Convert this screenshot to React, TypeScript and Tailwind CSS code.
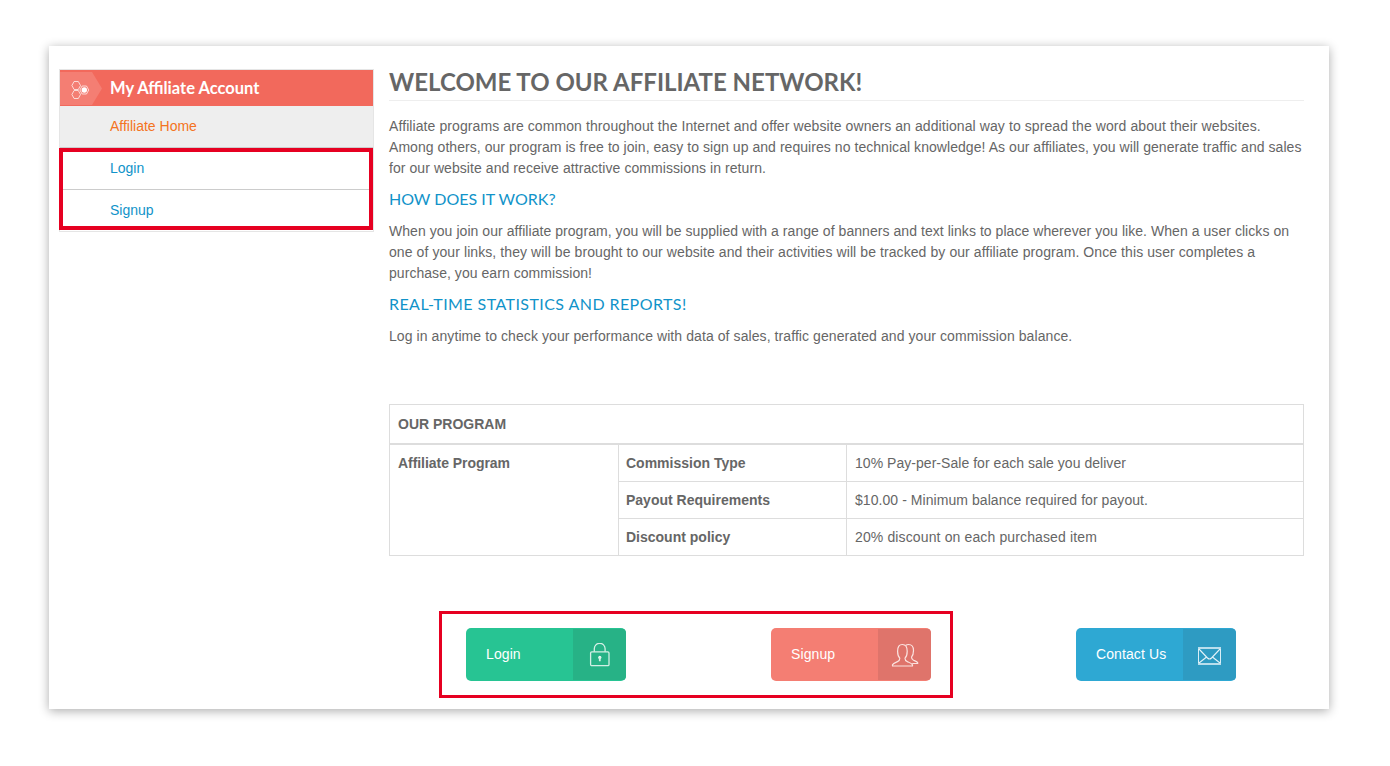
import type { ReactNode } from "react";

const HEADING = "font-['Lato',sans-serif]";

function HexIcon() {
  return (
    <svg className="block" width="20" height="20" viewBox="0 0 20 20" fill="none" stroke="#fff" strokeOpacity="0.7" strokeWidth="1">
      <path d="M4.1 1.5h4.2l2.2 4-2.2 4H4.1l-2.2-4z" />
      <path d="M4.1 10.5h4.2l2.2 4-2.2 4H4.1l-2.2-4z" />
      <path d="M12.1 6h4.4l2.2 4-2.2 4h-4.4L9.9 10z" />
      <circle cx="14.3" cy="10" r="2.7" fill="#fff" stroke="none" />
    </svg>
  );
}

function LockIcon() {
  return (
    <svg className="block" width="21" height="25" viewBox="0 0 21 25" fill="none" stroke="#d3efe5" strokeWidth="1.3">
      <rect x="1.6" y="8.8" width="18.4" height="13.8" rx="1.2" />
      <path d="M5.3 8.7V5.7a5.4 5.4 0 0 1 10.8 0v3" />
      <circle cx="10.8" cy="14.4" r="1.6" fill="#e8f7f1" stroke="none" />
      <path d="M10.8 14.2v4" strokeWidth="1.8" />
    </svg>
  );
}

function UsersIcon() {
  return (
    <svg className="block" width="29" height="25" viewBox="0 0 29 25" fill="none" stroke="#fbe3e0" strokeWidth="1.2" strokeLinejoin="round">
      <path d="M1.5 23h20v-1.2c-.5-1.5-3-2.3-5.2-3.2-1.7-.6-2.3-1.4-2.3-3.4 1.4-1.4 2.2-3.7 2.2-7 0-4.5-1.6-6.7-4.8-6.7S6.6 3.7 6.6 8.2c0 3.3.8 5.6 2.2 7 0 2-.6 2.8-2.3 3.4-2.2.9-4.5 1.7-5 3.2z" />
      <path d="M14.8 2.3c.9-.6 1.6-.8 2.7-.8 3.3 0 5 2.2 5 6 0 3-.7 5.2-2 6.6 0 1.8.5 2.5 2 3.1 2 .9 3.8 1.5 4.2 2.6v.7h-5.5" />
    </svg>
  );
}

function MailIcon() {
  return (
    <svg className="block" width="23" height="18" viewBox="0 0 23 18" fill="none">
      <path d="M.5 1v16M22.5 1v16" stroke="#d9eef6" />
      <path d="M0 1h23M0 17h23" stroke="#b9deec" strokeWidth="2" />
      <path d="M1 2l8.5 9q2 2 4 0L22 2M1 16l7.6-6M22 16l-7.6-6" stroke="#e1f2f8" strokeWidth="1.1" />
    </svg>
  );
}

function Action({ label, tone, side, icon }: { label: string; tone: string; side: string; icon: ReactNode }) {
  return (
    <a className={`flex h-[53px] w-[160px] overflow-hidden rounded-[5px] py-px text-[14px] tracking-[0.1px] text-white ${tone}`}>
      <span className="flex w-[107px] items-center pl-5 leading-[21px]">
        <span className="whitespace-nowrap">{label}</span>
      </span>
      <span className={`flex flex-1 justify-center ${side}`}>{icon}</span>
    </a>
  );
}

function Lines({ rows }: { rows: { text: string; spacing: string }[] }) {
  return (
    <p className="leading-[21px] whitespace-nowrap">
      {rows.map((r) => (
        <span key={r.text} className={`block ${r.spacing}`}>{r.text}</span>
      ))}
    </p>
  );
}

const program = [
  { name: "Commission Type", value: "10% Pay-per-Sale for each sale you deliver", spacing: "tracking-[0.04px]" },
  { name: "Payout Requirements", value: "$10.00 - Minimum balance required for payout.", spacing: "tracking-[0.06px]" },
  { name: "Discount policy", value: "20% discount on each purchased item", spacing: "tracking-[0.13px]" },
];

export default function App() {
  return (
    <div className="h-[766px] w-[1390px] overflow-hidden bg-white pt-[46px] pl-[49px] font-['Liberation_Sans',Arial,sans-serif] text-[14px] text-[#666]">
      <div className="relative flex h-[663px] w-[1280px] bg-white pl-[10px] shadow-[0_2px_10px_rgba(0,0,0,0.33)]">
        <aside className="mt-[23px] h-[163px] w-[315px] border border-[#e5e5e5]">
          <div className="flex h-[36px] bg-[#f2695c] pt-[2px]">
            <div className="h-[33px] w-[42px] bg-[#f47e73] pt-[8px] pl-[10px] [clip-path:polygon(0_0,32px_0,100%_50%,32px_100%,0_100%)]">
              <HexIcon />
            </div>
            <h2 className={`pl-2 text-[16.5px] leading-[33px] font-bold text-white ${HEADING}`}>My Affiliate Account</h2>
          </div>
          <nav className="leading-[41px]">
            <a className="block h-[42px] border-b border-[#ccc] bg-[#eee] pl-[50px] text-[#f47321]">Affiliate Home</a>
            <a className="block h-[42px] border-b border-[#ccc] pl-[50px] text-[#1193c9]">Login</a>
            <a className="block h-[41px] pl-[50px] text-[#1193c9]">Signup</a>
          </nav>
        </aside>

        <main className="ml-[15px] w-[915px] pt-[18px]">
          <h1 className={`h-[37px] border-b border-[#eee] text-[24px] leading-[36px] font-bold whitespace-nowrap ${HEADING}`}>
            WELCOME TO OUR AFFILIATE NETWORK!
          </h1>
          <div className="mt-[15px]">
            <Lines
              rows={[
                { text: "Affiliate programs are common throughout the Internet and offer website owners an additional way to spread the word about their websites.", spacing: "tracking-[0.09px]" },
                { text: "Among others, our program is free to join, easy to sign up and requires no technical knowledge! As our affiliates, you will generate traffic and sales", spacing: "tracking-[0.053px]" },
                { text: "for our website and receive attractive commissions in return.", spacing: "tracking-[0.07px]" },
              ]}
            />
          </div>
          <h3 className={`mt-[9px] text-[16px] leading-[22px] text-[#1193c9] ${HEADING}`}>HOW DOES IT WORK?</h3>
          <div className="mt-[11px]">
            <Lines
              rows={[
                { text: "When you join our affiliate program, you will be supplied with a range of banners and text links to place wherever you like. When a user clicks on", spacing: "tracking-[0.053px]" },
                { text: "one of your links, they will be brought to our website and their activities will be tracked by our affiliate program. Once this user completes a", spacing: "tracking-[0.083px]" },
                { text: "purchase, you earn commission!", spacing: "tracking-[0.05px]" },
              ]}
            />
          </div>
          <h3 className={`mt-[9px] text-[16px] leading-[22px] tracking-[0.43px] text-[#1193c9] ${HEADING}`}>REAL-TIME STATISTICS AND REPORTS!</h3>
          <div className="mt-[11px]">
            <Lines rows={[{ text: "Log in anytime to check your performance with data of sales, traffic generated and your commission balance.", spacing: "tracking-[0.083px]" }]} />
          </div>

          <section className="mt-[57px] border border-[#ddd]">
            <h4 className="h-[40px] border-b-2 border-[#ddd] pl-2 leading-[38px] font-bold">OUR PROGRAM</h4>
            <div className="flex h-[110px]">
              <div className="w-[229px] border-r border-[#ddd] pl-2 leading-[36px] font-bold tracking-[-0.05px]">Affiliate Program</div>
              <div className="flex-1 divide-y divide-[#ddd]">
                {program.map(({ name, value, spacing }) => (
                  <div key={name} className="flex h-[37px] leading-[36px] last:h-[36px]">
                    <div className="w-[228px] border-r border-[#ddd] pl-[7px] font-bold">{name}</div>
                    <div className={`pl-2 ${spacing}`}>{value}</div>
                  </div>
                ))}
              </div>
            </div>
          </section>

          <div className="mt-[72px] flex gap-[145px] pl-[77px]">
            <Action label="Login" tone="bg-[#27c493]" side="bg-[#27b286] pt-[14px]" icon={<LockIcon />} />
            <Action label="Signup" tone="bg-[#f47e73]" side="bg-[#df746b] pt-[14px] pl-px" icon={<UsersIcon />} />
            <Action label="Contact Us" tone="bg-[#2ea8d3]" side="bg-[#2e9bc2] pt-[18px]" icon={<MailIcon />} />
          </div>
        </main>

        <div className="absolute top-[102px] left-[10px] h-[82px] w-[314px] border-4 border-[#e60021]" />
        <div className="absolute top-[565px] left-[390px] h-[87px] w-[514px] border-3 border-[#e60021]" />
      </div>
    </div>
  );
}
